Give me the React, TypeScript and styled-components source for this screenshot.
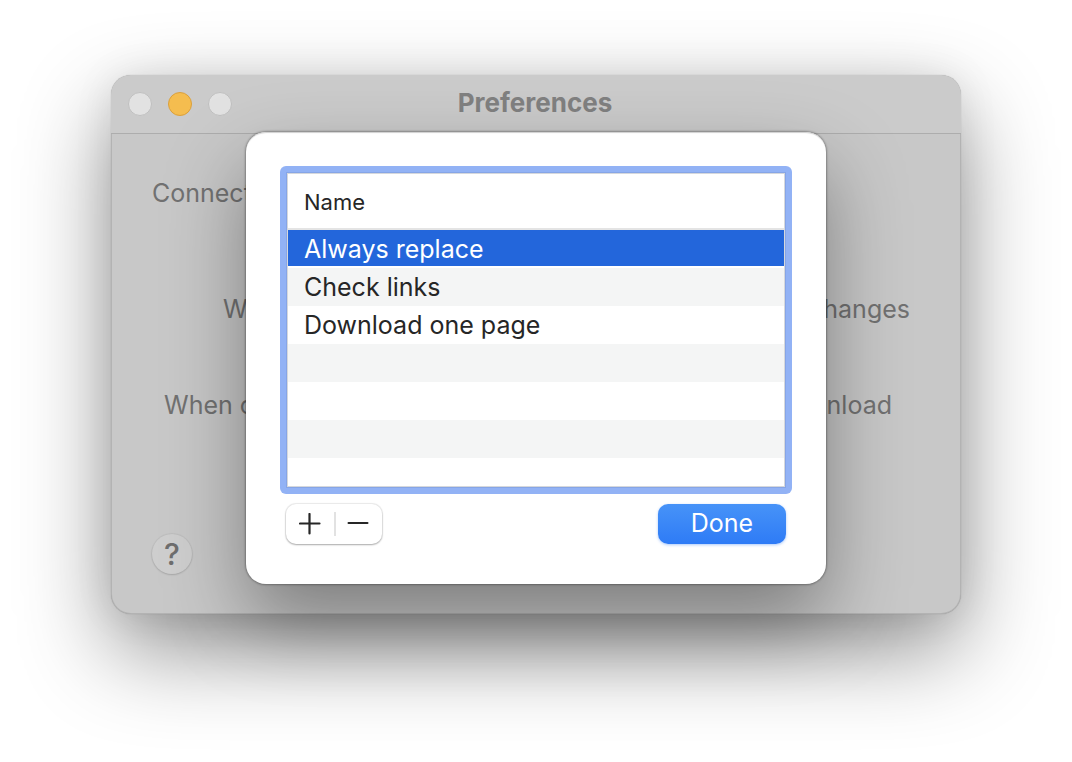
import React, { useState } from "react";
import styled, { createGlobalStyle } from "styled-components";

const GlobalStyle = createGlobalStyle`
  *, *::before, *::after { box-sizing: border-box; }
  body {
    margin: 0;
    background: #fff;
    font-family: Inter, "Liberation Sans", sans-serif;
    font-size: 25px;
    font-weight: 425;
    line-height: 38px;
  }
  button {
    padding: 0;
    border: 0;
    font: inherit;
  }
`;

const Desktop = styled.div`
  min-height: 100vh;
  padding: 75px 111px;
  overflow: hidden;
`;

const Window = styled.main`
  position: relative;
  display: flex;
  flex-direction: column;
  border-radius: 20px;
  background: #c8c8c8;
  box-shadow: inset 0 0 0 1px rgba(0, 0, 0, 0.1), 0 0 1px rgba(0, 0, 0, 0.3), 0 36px 90px rgba(0, 0, 0, 0.44), 0 0 40px rgba(0, 0, 0, 0.08);
`;

const TitleBar = styled.header`
  display: grid;
  grid-template-columns: 1fr auto 1fr;
  align-items: center;
  height: 59px;
  padding: 0 17px;
  border-bottom: 1px solid #adadad;
  border-radius: 20px 20px 0 0;
  background: #cbcbcb;
`;

const Lights = styled.div`
  display: flex;
  gap: 16px;
`;

const Light = styled.button<{ $active?: boolean }>`
  width: 24px;
  height: 24px;
  border-radius: 50%;
  border: 1px solid ${(p) => (p.$active ? "#dba03c" : "#c0c0c0")};
  background: ${(p) => (p.$active ? "#f5bd4f" : "#e2e2e2")};
`;

const Title = styled.h1`
  margin: 0;
  padding: 0 2px 2px 0;
  font-size: 26px;
  line-height: 38px;
  font-weight: 700;
  color: #818181;
`;

const Settings = styled.div`
  display: flex;
  flex-direction: column;
  height: 480px;
  padding: 40px 41px;
  border-radius: 0 0 20px 20px;
  overflow: hidden;
  color: #717171;
`;

const Setting = styled.div<{ $start?: number; $end?: number; $gap: number }>`
  display: flex;
  justify-content: space-between;
  padding: 0 ${(p) => p.$end ?? 0}px 0 ${(p) => p.$start ?? 0}px;
  margin-bottom: ${(p) => p.$gap}px;
`;

const HelpButton = styled.button`
  width: 40px;
  height: 40px;
  margin-top: auto;
  border-radius: 50%;
  background: #cecece;
  color: #6e6e6e;
  font-size: 30px;
  line-height: 40px;
  font-weight: 500;
  box-shadow: 0 0 1px 1px rgba(0, 0, 0, 0.05), 0 1px 2px rgba(0, 0, 0, 0.12);
`;

const Sheet = styled.section`
  position: absolute;
  top: 57px;
  left: 50%;
  transform: translateX(-50%);
  width: 580px;
  padding: 41px 40px 40px;
  border-radius: 20px;
  background: #fff;
  box-shadow: inset 0 2px 1px -1px #d0d0d0, 0 0 2px 1px rgba(0, 0, 0, 0.3), 0 36px 80px rgba(0, 0, 0, 0.38);
`;

const ListBox = styled.div`
  height: 314px;
  margin: 0 1px 17px;
  border: 1px solid #d6d8dc;
  box-shadow: 0 0 0 1px #86a5e6, 0 0 0 7px #92b2f5;
  clip-path: inset(-7px round 6px);
`;

const Scroller = styled.div`
  height: 100%;
  overflow: hidden;
`;

const Table = styled.table`
  width: 100%;
  border-collapse: separate;
  border-spacing: 0;
  color: #262626;
`;

const HeadCell = styled.th`
  height: 56px;
  padding: 2px 16px 0;
  border-bottom: 2px solid #e4e4e4;
  font-size: 22px;
  font-weight: 400;
  text-align: left;
`;

const Row = styled.tr<{ $selected?: boolean }>`
  background: ${(p) => (p.$selected ? "#2366db" : "#fff")};
  color: ${(p) => (p.$selected ? "#fff" : "inherit")};
  &:nth-child(even) {
    background: ${(p) => (p.$selected ? "#2366db" : "#f4f5f5")};
  }
`;

const Cell = styled.td<{ $selected?: boolean }>`
  height: 38px;
  padding: 2px 16px 0;
  line-height: 34px;
  border-bottom: 2px solid ${(p) => (p.$selected ? "#fff" : "transparent")};
`;

const Footer = styled.footer`
  display: flex;
  justify-content: space-between;
`;

const Segments = styled.div`
  display: flex;
  align-items: center;
  width: 96px;
  height: 40px;
  border-radius: 10px;
  background: #fff;
  box-shadow: 0 0 1px 1px rgba(0, 0, 0, 0.08), 0 1px 2px rgba(0, 0, 0, 0.28);
`;

const Segment = styled.button`
  display: flex;
  flex: 0 0 48px;
  align-items: center;
  justify-content: center;
  height: 24px;
  background: none;
  color: #262626;
  & + & {
    border-left: 2px solid #e2e2e2;
    padding-right: 3px;
  }
`;

const DoneButton = styled.button`
  width: 128px;
  height: 40px;
  padding-bottom: 2px;
  border-radius: 10px;
  background: linear-gradient(#4793f8, #2e7bf6);
  color: #fff;
  box-shadow: 0 1px 3px rgba(46, 123, 246, 0.4);
`;

const names = ["Always replace", "Check links", "Download one page", "", "", "", ""];

export default function App() {
  const [selected, setSelected] = useState(0);
  return (
    <>
      <GlobalStyle />
      <Desktop>
        <Window>
          <TitleBar>
            <Lights>
              <Light aria-label="Close" />
              <Light $active aria-label="Minimize" />
              <Light aria-label="Zoom" />
            </Lights>
            <Title>Preferences</Title>
          </TitleBar>
          <Settings>
            <Setting $gap={78}>
              <span>Connect</span>
            </Setting>
            <Setting $start={71} $end={10} $gap={58}>
              <span>W</span>
              <span>changes</span>
            </Setting>
            <Setting $start={12} $end={28} $gap={0}>
              <span>When c</span>
              <span>nload</span>
            </Setting>
            <HelpButton aria-label="Help">?</HelpButton>
          </Settings>
          <Sheet role="dialog" aria-label="Names">
            <ListBox>
              <Scroller>
                <Table>
                  <thead>
                    <tr>
                      <HeadCell scope="col">Name</HeadCell>
                    </tr>
                  </thead>
                  <tbody>
                    {names.map((name, i) => (
                      <Row key={i} $selected={i === selected} onClick={() => name && setSelected(i)}>
                        <Cell $selected={i === selected}>{name}</Cell>
                      </Row>
                    ))}
                  </tbody>
                </Table>
              </Scroller>
            </ListBox>
            <Footer>
              <Segments>
                <Segment aria-label="Add">
                  <svg width="22" height="22" viewBox="0 0 22 22" stroke="currentColor" strokeWidth="2.2" strokeLinecap="round">
                    <path d="M1 10.5H20.5M10.5 1V20.5" />
                  </svg>
                </Segment>
                <Segment aria-label="Remove">
                  <svg width="22" height="22" viewBox="0 0 22 22" stroke="currentColor" strokeWidth="2" strokeLinecap="round">
                    <path d="M1.5 10H20.5" />
                  </svg>
                </Segment>
              </Segments>
              <DoneButton>Done</DoneButton>
            </Footer>
          </Sheet>
        </Window>
      </Desktop>
    </>
  );
}
